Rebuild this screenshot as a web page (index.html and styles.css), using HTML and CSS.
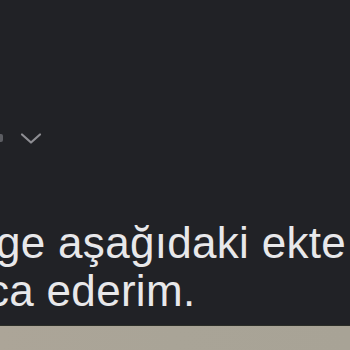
FILE: index.html
```html
<!DOCTYPE html>
<html lang="tr">
<head>
<meta charset="utf-8">
<link rel="stylesheet" href="styles.css">
</head>
<body>
<div class="screen">
  <div class="meta">
    <span class="meta-edge"></span>
    <svg class="chevron" width="24" height="13" viewBox="0 0 24 13" aria-hidden="true">
      <path d="M3 2.5 L12 10.5 L21 2.5" fill="none" stroke="#8e8e93" stroke-width="2.2" stroke-linecap="round" stroke-linejoin="round"/>
    </svg>
  </div>
  <div class="message">
    <p class="line line-1">ge aşağıdaki ekte</p>
    <p class="line line-2">ca ederim.</p>
  </div>
  <div class="dock"></div>
</div>
</body>
</html>
```
FILE: styles.css
```css
html, body {
  margin: 0;
  padding: 0;
  background: #212226;
}
.screen {
  width: 350px;
  height: 350px;
  overflow: hidden;
  display: flex;
  flex-direction: column;
  background: #212226;
}
.meta {
  margin-top: 131px;
  height: 14px;
  display: flex;
  align-items: center;
  gap: 16px;
}
.meta-edge {
  width: 3px;
  height: 8px;
  border-radius: 0 2px 2px 0;
  background: #5c5d62;
}
.chevron {
  display: block;
}
.message {
  margin-top: 74px;
  font-family: "Liberation Sans", Arial, sans-serif;
  font-size: 44px;
  line-height: 48px;
  letter-spacing: 0.3px;
  color: #e8e8ea;
  white-space: nowrap;
}
.line {
  margin: 0;
}
.line-1 {
  margin-left: -4px;
}
.line-2 {
  margin-left: -13px;
}
.dock {
  margin-top: 10px;
  flex: 1;
  border-top: 1px solid #2c2e28;
  background: linear-gradient(90deg, #aca598 0%, #a9a497 50%, #a8a396 100%);
}
```
